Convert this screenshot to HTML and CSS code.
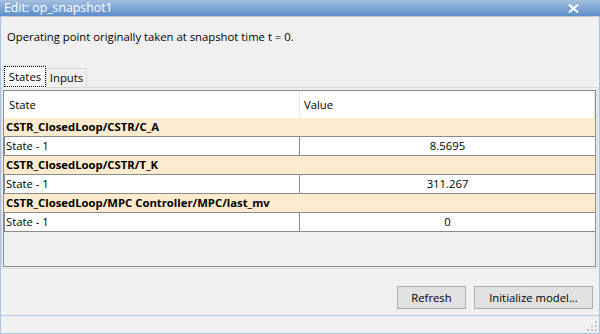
FILE: index.html
```html
<!DOCTYPE html>
<html lang="en">
<head>
  <meta charset="UTF-8">
  <title>Edit: op_snapshot1</title>
  <link rel="stylesheet" href="styles.css">
</head>
<body>
  <div class="window">
    <div class="titlebar">
      <span class="title">Edit: op_snapshot1</span>
      <svg class="close" viewBox="0 0 11 9" width="11" height="9">
        <path d="M1 0.5 L10 8.5 M10 0.5 L1 8.5" stroke="#fff" stroke-width="2"/>
      </svg>
    </div>
    <div class="frame">
      <p class="info">Operating point originally taken at snapshot time t = 0.</p>

      <div class="tabs">
        <div class="tab active"><span>States</span></div>
        <div class="tab">Inputs</div>
      </div>

      <div class="panel">
        <div class="grid">
          <div class="grid-head">
            <div class="th th-name">State</div>
            <div class="th th-value">Value</div>
          </div>

          <div class="group">CSTR_ClosedLoop/CSTR/C_A</div>
          <div class="row">
            <div class="cell">State - 1</div>
            <div class="cell value">8.5695</div>
          </div>

          <div class="group">CSTR_ClosedLoop/CSTR/T_K</div>
          <div class="row">
            <div class="cell">State - 1</div>
            <div class="cell value">311.267</div>
          </div>

          <div class="group">CSTR_ClosedLoop/MPC Controller/MPC/last_mv</div>
          <div class="row">
            <div class="cell">State - 1</div>
            <div class="cell value">0</div>
          </div>
        </div>
      </div>

      <div class="actions">
        <button class="btn btn-refresh">Refresh</button>
        <button class="btn btn-init">Initialize model...</button>
      </div>

      <div class="status">
        <svg class="grip" viewBox="0 0 12 12" width="12" height="12">
          <rect x="9" y="1" width="2" height="2"/>
          <rect x="5" y="5" width="2" height="2"/>
          <rect x="9" y="5" width="2" height="2"/>
          <rect x="1" y="9" width="2" height="2"/>
          <rect x="5" y="9" width="2" height="2"/>
          <rect x="9" y="9" width="2" height="2"/>
        </svg>
      </div>
    </div>
  </div>
</body>
</html>
```

FILE: styles.css
```css
:root {
  --frame-blue: #a9c3df;
  --panel-gray: #f0f0f0;
  --line-light: #d9d9d9;
  --line-dark: #8a8a8a;
  --group-bg: #fdebcd;
  --text: #000000;
}

* {
  margin: 0;
  padding: 0;
  box-sizing: border-box;
}

body {
  width: 600px;
  height: 334px;
  font-family: 'Open Sans', 'Noto Sans', sans-serif;
  font-size: 11.3px;
  color: var(--text);
  background: var(--panel-gray);
  overflow: hidden;
}

.window {
  display: flex;
  flex-direction: column;
  height: 334px;
}

/* Title bar */
.titlebar {
  height: 16px;
  display: flex;
  align-items: center;
  justify-content: space-between;
  padding: 0 21px 0 4px;
  background: linear-gradient(#a5c0df, #5d8ecb);
  color: #ffffff;
}

.title {
  font-size: 12.3px;
  line-height: 16px;
}

.close {
  display: block;
}

.frame {
  flex: 1;
  display: flex;
  flex-direction: column;
  border: 1px solid var(--frame-blue);
  border-top: 1px solid #c9c9c9;
}

.info {
  height: 49px;
  padding: 12px 6px 0;
  line-height: 16px;
}

/* Tabs */
.tabs {
  height: 22px;
  display: flex;
  align-items: flex-end;
  padding-left: 2px;
  position: relative;
  z-index: 1;
  margin-bottom: -1px;
}

.tab {
  height: 20px;
  width: 41px;
  border: 1px solid var(--line-light);
  border-bottom: none;
  text-align: center;
  line-height: 18px;
}

.tab.active {
  height: 23px;
  width: 43px;
  background: #ffffff;
  border-right: none;
}

.tab.active span {
  display: block;
  height: 21px;
  line-height: 19px;
  border: 1px dotted #000000;
}

/* Panel and grid */
.panel {
  height: 182px;
  margin-right: 1px;
  border: 1px solid var(--line-light);
  padding: 2px 1px 1px 1px;
  display: flex;
}

.grid {
  flex: 1;
  border: 1px solid var(--line-dark);
  background: var(--panel-gray);
}

.grid-head {
  height: 27px;
  display: flex;
  background: #ffffff;
}

.th {
  line-height: 27px;
}

.th-name {
  width: 295px;
  padding-left: 5px;
}

.th-value {
  flex: 1;
  padding-left: 4px;
  border-left: 1px solid #e6e6e6;
  border-right: 1px solid #e6e6e6;
}

.group {
  height: 18px;
  line-height: 18px;
  padding-left: 2px;
  font-weight: 700;
  background: var(--group-bg);
}

.row {
  height: 20px;
  display: flex;
  background: #ffffff;
  border-top: 1px solid var(--line-dark);
  border-bottom: 1px solid var(--line-dark);
  border-left: 1px solid var(--line-dark);
}

.cell {
  line-height: 18px;
}

.row .cell:first-child {
  width: 294px;
  padding-left: 1px;
}

.cell.value {
  flex: 1;
  text-align: center;
  border-left: 1px solid var(--line-dark);
}

/* Buttons */
.actions {
  height: 46px;
  display: flex;
  justify-content: flex-end;
  gap: 8px;
  padding: 17px 6px 0 0;
}

.btn {
  height: 23px;
  background: #e1e1e1;
  border: 1px solid #adadad;
  font-family: inherit;
  font-size: 11.3px;
  color: var(--text);
}

.btn-refresh {
  width: 69px;
}

.btn-init {
  width: 119px;
}

/* Status strip */
.status {
  flex: 1;
  border-top: 1px solid #b3cbe4;
  display: flex;
  justify-content: flex-end;
  align-items: flex-end;
  padding: 0 1px 1px 0;
}

.grip {
  fill: #c4c4c4;
}
```
